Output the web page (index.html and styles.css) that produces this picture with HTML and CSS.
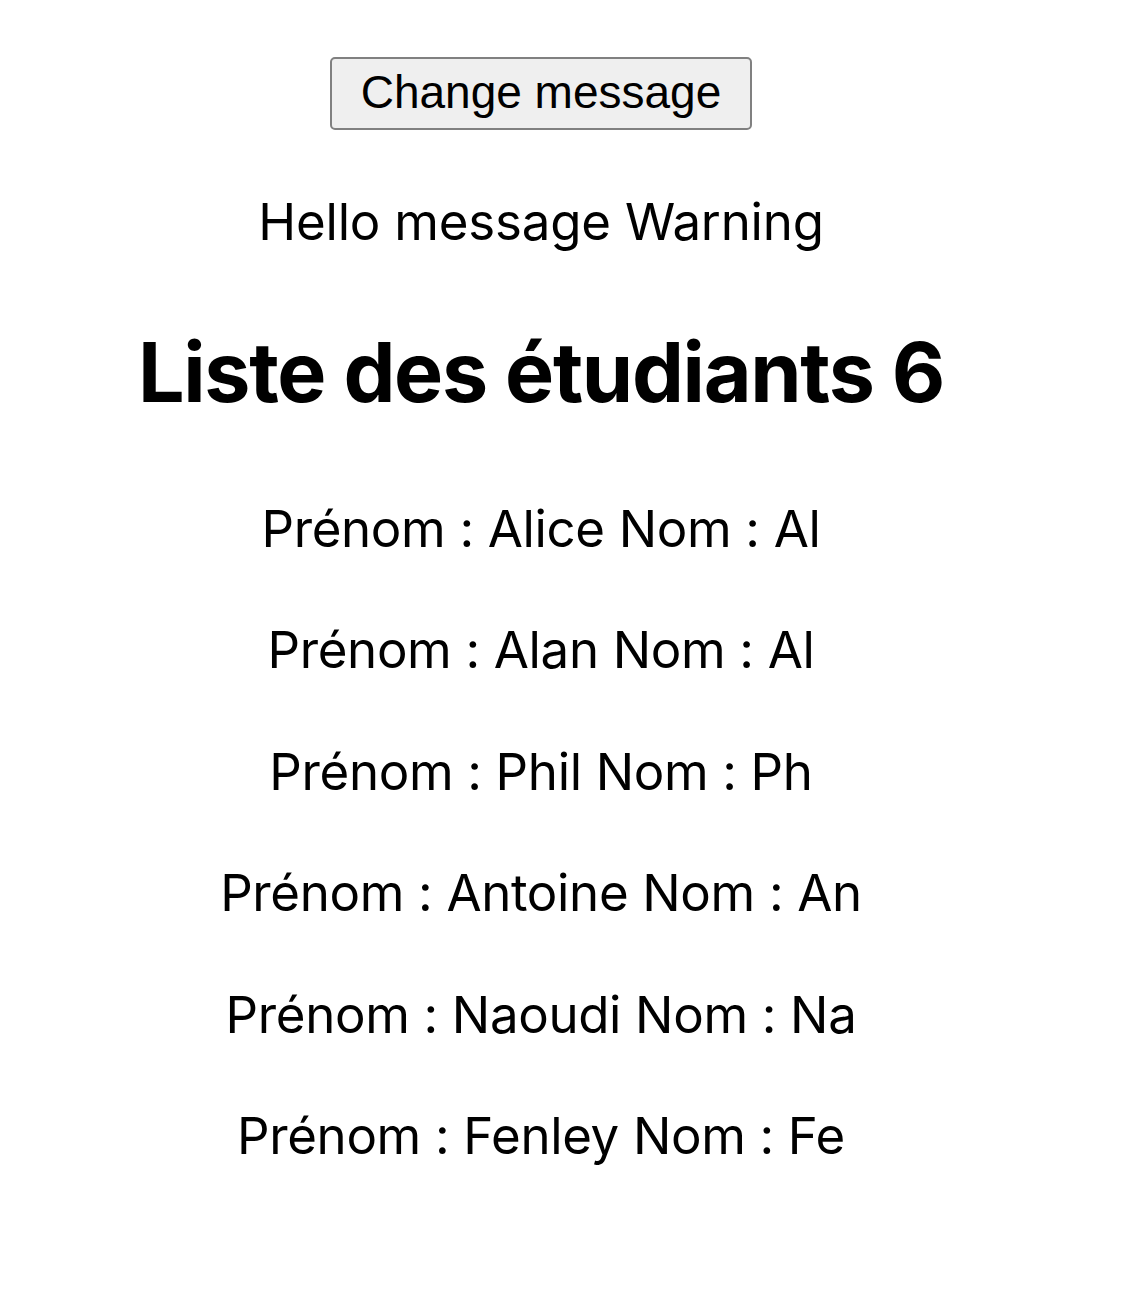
FILE: index.html
```html
<!DOCTYPE html>
<html lang="fr">
<head>
<meta charset="utf-8">
<title>Liste des étudiants</title>
<link rel="stylesheet" href="styles.css">
</head>
<body>
<div class="app">
  <button class="btn" type="button">Change message</button>
  <p class="hello">Hello message Warning</p>
  <h2 class="title">Liste des étudiants 6</h2>
  <div class="students">
    <p class="student">Prénom : Alice Nom : Al</p>
    <p class="student">Prénom : Alan Nom : Al</p>
    <p class="student">Prénom : Phil Nom : Ph</p>
    <p class="student">Prénom : Antoine Nom : An</p>
    <p class="student">Prénom : Naoudi Nom : Na</p>
    <p class="student">Prénom : Fenley Nom : Fe</p>
  </div>
</div>
</body>
</html>
```
FILE: styles.css
```css
html, body {
  margin: 0;
  padding: 0;
  background: #ffffff;
}

.app {
  width: 1082px;
  padding-top: 57px;
  display: flex;
  flex-direction: column;
  align-items: center;
  font-family: Inter, "Liberation Sans", sans-serif;
  font-feature-settings: "calt" 0;
  color: #000000;
}

.btn {
  box-sizing: border-box;
  height: 73px;
  padding: 0 29px 4px;
  font-family: "Liberation Sans", Arial, sans-serif;
  font-size: 46px;
  color: #000000;
  background: #efefef;
  border: 2px solid #808080;
  border-radius: 5px;
}

.hello {
  margin: 61px 0 0;
  font-size: 51px;
  line-height: 62px;
  letter-spacing: -0.2px;
}

.title {
  margin: 69px 0 76px;
  font-size: 82.5px;
  font-weight: 700;
  line-height: 100px;
  letter-spacing: -1.3px;
}

.students {
  display: flex;
  flex-direction: column;
  align-items: center;
}

.student {
  margin: 0 0 59.4px;
  font-size: 51px;
  line-height: 62px;
  letter-spacing: -0.35px;
}
```
